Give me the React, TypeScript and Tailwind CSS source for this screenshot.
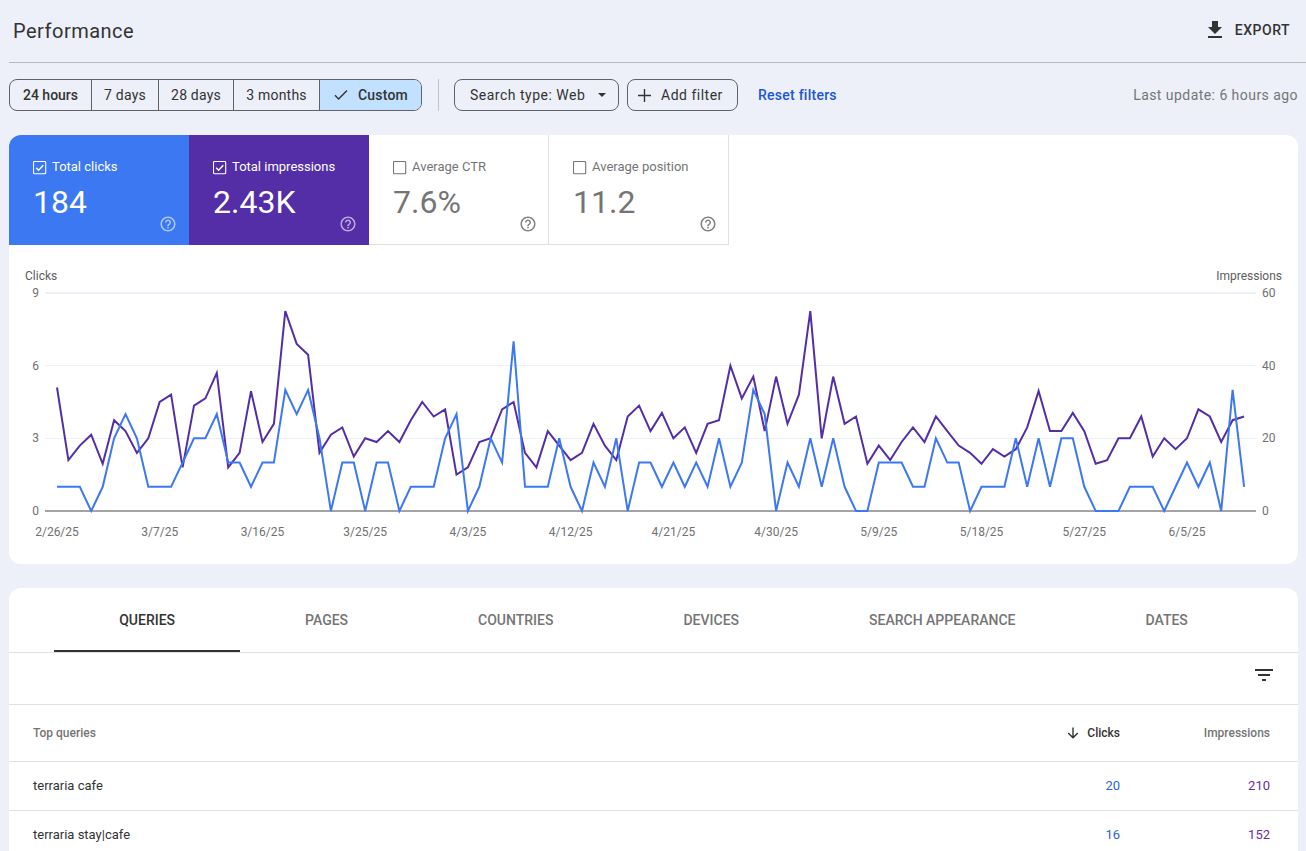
import { clsx } from "clsx";

const RANGES = [
  { label: "24 hours", cls: "w-[82px] font-medium" },
  { label: "7 days", cls: "w-[67px] tracking-[0.2px]" },
  { label: "28 days", cls: "w-[75px] tracking-[0.2px]" },
  { label: "3 months", cls: "w-[86px] tracking-[0.2px]" },
];

const METRICS = [
  { label: "Total clicks", value: "184", checked: true, cls: "bg-[#3b78f2] text-white" },
  { label: "Total impressions", value: "2.43K", checked: true, cls: "bg-[#542ea6] text-white" },
  { label: "Average CTR", value: "7.6%", checked: false, cls: "border-r border-b border-[#e0e0e0] text-[#757575]" },
  { label: "Average position", value: "11.2", checked: false, cls: "border-r border-b border-[#e0e0e0] text-[#757575]" },
];

const TABS = ["QUERIES", "PAGES", "COUNTRIES", "DEVICES", "SEARCH APPEARANCE", "DATES"];

const ROWS = [
  { query: "terraria cafe", clicks: 20, impressions: 210 },
  { query: "terraria stay|cafe", clicks: 16, impressions: 152 },
];

// Daily values, 2/26/25 to 6/10/25
const CLICKS = [
  1, 1, 1, 0, 1, 3, 4, 3, 1, 1, 1, 2, 3, 3, 4, 2, 2, 1, 2, 2, 5, 4, 5, 3, 0, 2, 2, 0, 2, 2, 0, 1, 1, 1, 3,
  4, 0, 1, 3, 2, 7, 1, 1, 1, 3, 1, 0, 2, 1, 3, 0, 2, 2, 1, 2, 1, 2, 1, 3, 1, 2, 5, 4, 0, 2, 1, 3, 1, 3, 1,
  0, 0, 2, 2, 2, 1, 1, 3, 2, 2, 0, 1, 1, 1, 3, 1, 3, 1, 3, 3, 1, 0, 0, 0, 1, 1, 1, 0, 1, 2, 1, 2, 0, 5, 1,
];
const IMPRESSIONS = [
  34, 14, 18, 21, 13, 25, 22, 16, 20, 30, 32, 12, 29, 31, 38, 12, 16, 33, 19, 24, 55, 46, 43, 16, 21, 23, 15,
  20, 19, 22, 19, 25, 30, 26, 28, 10, 12, 19, 20, 28, 30, 16, 12, 22, 18, 14, 16, 24, 18, 14, 26, 29, 22, 27,
  20, 23, 16, 24, 25, 40, 31, 37, 22, 37, 24, 32, 55, 20, 37, 24, 26, 13, 18, 14, 19, 23, 19, 26, 22, 18, 16,
  13, 17, 15, 17, 23, 33, 22, 22, 27, 22, 13, 14, 20, 20, 26, 15, 20, 17, 20, 28, 26, 19, 25, 26,
];
const DATES = [
  "2/26/25", "3/7/25", "3/16/25", "3/25/25", "4/3/25", "4/12/25",
  "4/21/25", "4/30/25", "5/9/25", "5/18/25", "5/27/25", "6/5/25",
];

const X0 = 48;
const STEP = 11.414;
const BASE = 266;
const HEIGHT = 218;

function toPoints(values: number[], max: number) {
  return values.map((v, i) => `${(X0 + i * STEP).toFixed(1)},${(BASE - (v / max) * HEIGHT).toFixed(1)}`).join(" ");
}

function Icon({ d, className }: { d: string; className?: string }) {
  return (
    <svg viewBox="0 0 24 24" fill="currentColor" className={clsx("shrink-0", className)}>
      <path d={d} />
    </svg>
  );
}

function Checkbox({ checked }: { checked: boolean }) {
  return (
    <svg viewBox="0 0 14 14" className="size-3.5 shrink-0" fill="none" stroke="currentColor">
      <rect x="0.5" y="0.5" width="12.2" height="12.2" rx="1" strokeWidth="1.1" />
      {checked && <path d="M3.2 6.8 5.6 9.2 10.3 4.3" strokeWidth="1.4" />}
    </svg>
  );
}

function MetricCard({ label, value, checked, cls }: (typeof METRICS)[number]) {
  return (
    <div className={clsx("flex h-[110px] w-[180px] flex-col pl-6", cls)}>
      <div className="mt-[23px] flex h-[18px] items-center gap-[5px]">
        <div className="mt-px"><Checkbox checked={checked} /></div>
        <span className="text-[13px] whitespace-nowrap">{label}</span>
      </div>
      <div className="mt-[8px] text-[32px] leading-9">{value}</div>
      <Icon
        className={clsx("-mt-[5px] size-[18px] self-end", checked ? "mr-3 opacity-60" : "mr-[11px] opacity-90")}
        d="M11 18h2v-2h-2v2zm1-16C6.48 2 2 6.48 2 12s4.48 10 10 10 10-4.48 10-10S17.52 2 12 2zm0 18c-4.41 0-8-3.59-8-8s3.59-8 8-8 8 3.59 8 8-3.59 8-8 8zm0-14c-2.21 0-4 1.79-4 4h2c0-1.1.9-2 2-2s2 .9 2 2c0 2-3 1.75-3 5h2c0-2.25 3-2.5 3-5 0-2.21-1.79-4-4-4z"
      />
    </div>
  );
}

function Chart() {
  return (
    <svg width="1289" height="319" className="block text-[12px]" fill="#707070">
      <text x="16" y="35" fill="#5c5c5c">Clicks</text>
      <text x="1273" y="35" textAnchor="end" fill="#5c5c5c">Impressions</text>
      {[0, 1, 2, 3].map((i) => {
        const y = Math.floor(BASE - (i * HEIGHT) / 3);
        const edge = i === 0 || i === 3;
        const labelY = i === 2 ? y + 5 : y + 4;
        return (
          <g key={i}>
            <rect x="36" y={edge ? y - 1 : y} width="1211" height={edge ? 2 : 1} fill={i === 0 ? "#a3a3a3" : "#edf0f7"} />
            <text x="30" y={labelY} textAnchor="end">{i * 3}</text>
            <text x="1253" y={labelY}>{i * 20}</text>
          </g>
        );
      })}
      {DATES.map((date, i) => (
        <text key={date} x={X0 + i * 9 * STEP} y="291" textAnchor="middle">{date}</text>
      ))}
      <polyline points={toPoints(IMPRESSIONS, 60)} fill="none" stroke="#542ea6" strokeWidth="2" />
      <polyline points={toPoints(CLICKS, 9)} fill="none" stroke="#3b78f2" strokeWidth="2" />
    </svg>
  );
}

export default function App() {
  return (
    <div className="h-[851px] w-[1306px] overflow-hidden bg-[#edf0f9] pl-[9px] font-['Roboto',sans-serif] text-[#333]">
      <header className="flex h-[63px] items-center justify-between border-b border-[#b7bbbe] pr-4 pl-1">
        <h1 className="text-[20px] tracking-[0.5px]">Performance</h1>
        <button className="-mt-[2px] flex items-center gap-2 text-sm font-medium tracking-[0.5px]">
          <Icon className="size-6" d="M19 9h-4V3H9v6H5l7 7 7-7zM5 18v2h14v-2H5z" />
          EXPORT
        </button>
      </header>

      <div className="mt-4 flex h-8 items-center pr-2 text-[14px]">
        <div className="flex h-8 overflow-hidden rounded-lg border border-[#5f6368]">
          {RANGES.map((range) => (
            <button key={range.label} className={clsx("border-r border-[#5f6368]", range.cls)}>
              {range.label}
            </button>
          ))}
          <button className="flex w-[101px] items-center bg-[#c2e0ff] pl-[14px] font-medium tracking-[0.2px]">
            <svg viewBox="0 0 14 12" className="h-3 w-3.5" fill="none" stroke="currentColor" strokeWidth="1.4">
              <path d="M1 6.3 4.6 9.9 13 1.4" />
            </svg>
            <span className="ml-[10px]">Custom</span>
          </button>
        </div>
        <div className="mr-[15px] ml-4 h-8 w-px bg-[#c0c3c7]" />
        <button className="flex h-8 w-[165px] items-center rounded-lg border border-[#5f6368] pl-[15px] tracking-[0.5px]">
          <span>Search type: Web</span>
          <svg viewBox="0 0 8 4" className="mr-3 ml-auto h-1 w-2" fill="currentColor"><path d="M0 0h8L4 4z" /></svg>
        </button>
        <button className="ml-2 flex h-8 w-[111px] items-center rounded-lg border border-[#5f6368] pl-[10px] tracking-[0.5px]">
          <svg viewBox="0 0 13 13" className="size-[13px]" stroke="currentColor" strokeWidth="1.4">
            <path d="M6.5 0v13M0 6.5h13" />
          </svg>
          <span className="ml-[10px]">Add filter</span>
        </button>
        <button className="ml-5 font-medium tracking-[0.25px] text-[#1a56db]">Reset filters</button>
        <span className="ml-auto tracking-[0.45px] text-[#757575]">Last update: 6 hours ago</span>
      </div>

      <section className="mt-6 h-[429px] w-[1289px] overflow-hidden rounded-xl bg-white">
        <div className="flex">
          {METRICS.map((metric) => (
            <MetricCard key={metric.label} {...metric} />
          ))}
        </div>
        <Chart />
      </section>

      <section className="mt-6 w-[1289px] overflow-hidden rounded-t-xl bg-white">
        <nav className="flex h-[65px] justify-center border-b border-[#e0e0e0] text-sm font-medium">
          {TABS.map((tab, i) => (
            <button
              key={tab}
              className={clsx("border-b-2 px-[65px] pt-[2px]", i === 0 ? "border-[#333] text-[#333]" : "border-transparent text-[#757575]")}
            >
              {tab}
            </button>
          ))}
        </nav>
        <div className="flex h-[52px] items-start justify-end border-b border-[#e0e0e0] pt-[10px] pr-[22px]">
          <Icon className="size-6" d="M10 18h4v-2h-4v2zM3 6v2h18V6H3zm3 7h12v-2H6v2z" />
        </div>
        <div className="flex h-[57px] items-center border-b border-[#e0e0e0] pr-7 pl-6 text-[12px] font-medium text-[#757575]">
          <span className="flex-1">Top queries</span>
          <span className="flex items-center justify-end gap-2 text-[#333]">
            <svg viewBox="0 0 12 12" className="size-3" fill="none" stroke="currentColor" strokeWidth="1.4">
              <path d="M6 .5v10M1.2 6 6 10.7 10.8 6" />
            </svg>
            Clicks
          </span>
          <span className="w-[150px] text-right">Impressions</span>
        </div>
        {ROWS.map((row) => (
          <div key={row.query} className="flex h-[49px] items-center border-b border-[#e0e0e0] pr-7 pl-6 text-[13px]">
            <span className="flex-1">{row.query}</span>
            <span className="text-[#2765d8]">{row.clicks}</span>
            <span className="w-[150px] text-right text-[#6a2da3]">{row.impressions}</span>
          </div>
        ))}
      </section>
    </div>
  );
}
